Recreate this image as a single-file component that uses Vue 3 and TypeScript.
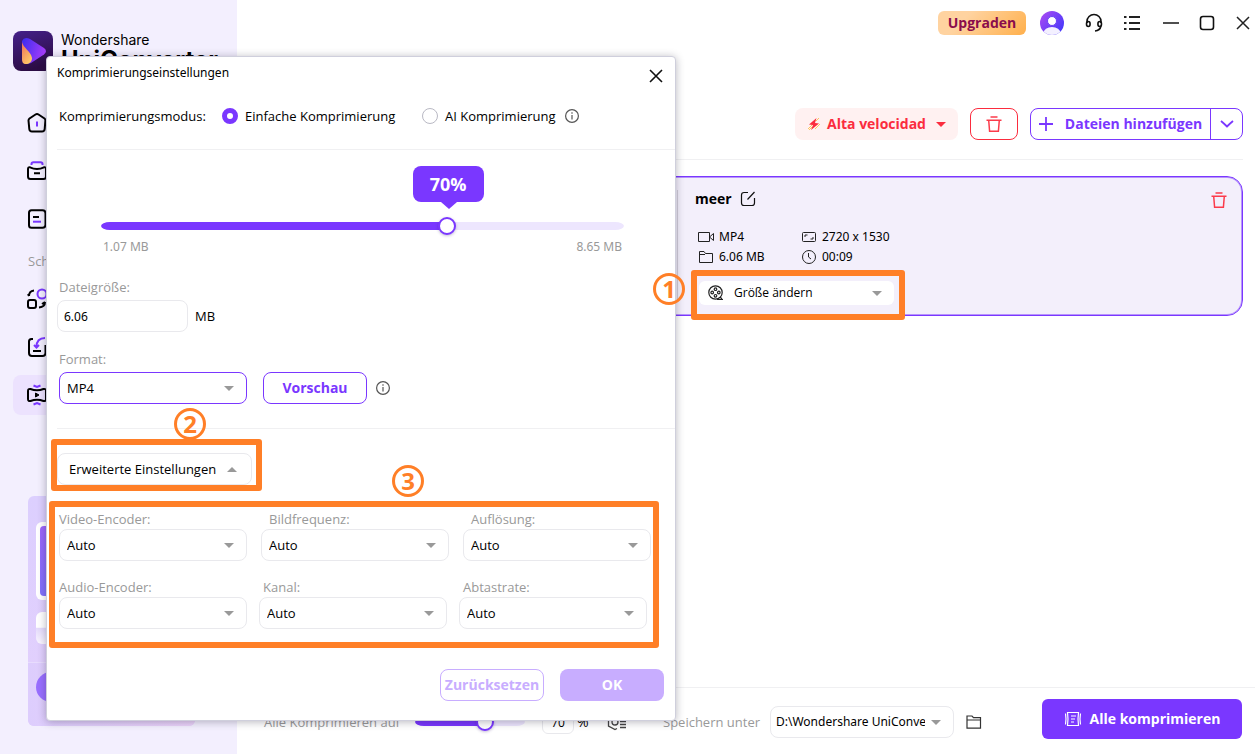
<script setup lang="ts">
import { computed, ref } from 'vue'

interface Field {
  id: string
  label: string
  indent: string
}

const percent = ref(70)
const batchPercent = ref(70)
const mode = ref('simple')
const size = ref('6.06')
const minPercent = 10

const fill = computed(() => ((percent.value - minPercent) / (100 - minPercent)) * 100)
const batchFill = computed(() => ((batchPercent.value - minPercent) / (100 - minPercent)) * 100)

const videoFields: Field[] = [
  { id: 'video-encoder', label: 'Video-Encoder:', indent: 'flush' },
  { id: 'frame-rate', label: 'Bildfrequenz:', indent: 'wide' },
  { id: 'resolution', label: 'Auflösung:', indent: 'wide' },
]
const audioFields: Field[] = [
  { id: 'audio-encoder', label: 'Audio-Encoder:', indent: 'flush' },
  { id: 'channel', label: 'Kanal:', indent: 'narrow' },
  { id: 'sample-rate', label: 'Abtastrate:', indent: 'narrow' },
]
</script>

<template>
  <div class="app">
    <aside class="sidebar">
      <div class="brand">
        <svg class="logo" viewBox="0 0 40 40" aria-hidden="true">
          <defs>
            <linearGradient id="logo-bg" x1="0" y1="0" x2="0.3" y2="1">
              <stop offset="0" stop-color="#45208a" />
              <stop offset="1" stop-color="#2c0d45" />
            </linearGradient>
            <linearGradient id="logo-play" x1="0" y1="0" x2="1" y2="0.3">
              <stop offset="0" stop-color="#3a2cf0" />
              <stop offset="1" stop-color="#a23cf8" />
            </linearGradient>
            <linearGradient id="logo-drop" x1="0" y1="0" x2="0.6" y2="1">
              <stop offset="0" stop-color="#f0705a" />
              <stop offset="1" stop-color="#ffc766" />
            </linearGradient>
          </defs>
          <rect width="40" height="40" rx="8" fill="url(#logo-bg)" />
          <path d="M9 10Q11 5.500 17 8L31 17Q35 20 31 23.500L18 32Q12 34 9 29Z" fill="url(#logo-play)" />
          <path d="M9 11C10 17 18 20 19 27C19 31 16 33 13 33C10 33 9 31 9 28Z" fill="url(#logo-drop)" />
        </svg>
        <div class="brand-name">
          <span>Wondershare</span>
          <strong>UniConverter</strong>
        </div>
      </div>

      <nav class="nav" aria-label="Navigation">
        <a class="nav-item" href="#home" aria-label="Start">
          <svg viewBox="0 0 20 20"><path d="M8.500 1.500Q10 .5 11.500 1.500L17.500 5.500Q18.500 6.300 18.400 7.500L17.700 16Q17.500 18.500 15 18.500H5Q2.500 18.500 2.300 16L1.500 7.500Q1.500 6.300 2.500 5.500Z" /><path class="accent" d="M10 8.500V13.500" /></svg>
        </a>
        <a class="nav-item" href="#tools" aria-label="Werkzeuge">
          <svg viewBox="0 0 20 20"><path class="accent" d="M4.500 4V3Q4.500 1.200 6.500 1.200H13.500Q15.500 1.200 15.500 3V4" /><path d="M1 8Q1 6 3 6.300Q10 9.500 17 6.300Q19 6 19 8V15.500Q19 18 16.500 18H3.500Q1 18 1 15.500ZM7 12.300H13" /></svg>
        </a>
        <a class="nav-item" href="#files" aria-label="Dateien">
          <svg viewBox="0 0 20 20"><path d="M4.500 1.200H15.500Q18.500 1.200 18.500 4.500V15.800Q18.500 18.800 15.500 18.800H4.500Q2 18.800 2 16.300V3.700Q2 1.200 4.500 1.200ZM6 8H12" /><path class="accent" d="M6 12.700H14" /></svg>
        </a>
        <span class="nav-caption">Schnellzugriff</span>
        <a class="nav-item" href="#convert" aria-label="Konvertieren">
          <svg viewBox="0 0 20 20"><rect x="1" y="11" width="8" height="8" rx="2" /><path d="M2 7Q2 2 7 1.500M2 7L1 5M18 13Q18 18 12 18.500M18 13L15 15" /><circle class="accent" cx="15" cy="5" r="4.500" /></svg>
        </a>
        <a class="nav-item" href="#download" aria-label="Herunterladen">
          <svg viewBox="0 0 20 20"><path d="M6 2H4.500Q2 2 2 4.500V16Q2 19 5 19H15.500Q18.500 19 18.500 16V8M6 14H14" /><path class="accent" d="M18 1Q9.500 1 9.500 10M7 8L9.500 10.500L12 8" /></svg>
        </a>
        <a class="nav-item active" href="#compress" aria-label="Komprimieren">
          <svg viewBox="0 0 20 20"><path d="M1 6Q1 3.500 3.500 4Q10 6.500 16.500 4Q19 3.500 19 6V14Q19 16.500 16.500 16Q10 13.500 3.500 16Q1 16.500 1 14Z" /><path d="M8.500 8L12 10L8.500 12Z" fill="#000" stroke-width="1" /><path class="accent" d="M6.500 .5L10 2L13.500 .5M6.500 19.500L10 18L13.500 19.500" /></svg>
        </a>
      </nav>

      <div class="promo" aria-hidden="true">
        <div class="promo-picture"><div></div></div>
        <div class="promo-bar"></div>
        <div class="promo-foot"><div class="promo-button"></div></div>
      </div>
    </aside>

    <main class="main">
      <header class="titlebar">
        <button class="upgrade" type="button">Upgraden</button>
        <button class="icon-button" type="button" aria-label="Konto">
          <svg width="24" height="24" viewBox="0 0 24 24">
            <defs>
              <linearGradient id="avatar" x1="0" y1="0" x2="1" y2="0.8"><stop offset="0" stop-color="#b04cf2" /><stop offset="1" stop-color="#4338fb" /></linearGradient>
              <clipPath id="avatar-clip"><circle cx="12" cy="12" r="12" /></clipPath>
            </defs>
            <g clip-path="url(#avatar-clip)"><rect width="24" height="24" fill="url(#avatar)" /><ellipse cx="12" cy="22" rx="8.500" ry="6" fill="#f3f0ff" /><circle cx="12" cy="10" r="4.500" fill="#fff" stroke="#6b42f5" /></g>
          </svg>
        </button>
        <button class="icon-button" type="button" aria-label="Support">
          <svg width="20" height="20" viewBox="0 0 20 20" fill="none" stroke="#111" stroke-width="1.600"><path d="M3 10V8.500A7 7 0 0 1 17 8.500V10M17 13Q16 17.500 11 18" /><ellipse cx="4.300" cy="11" rx="1.800" ry="2.500" /><ellipse cx="15.700" cy="11" rx="1.800" ry="2.500" /></svg>
        </button>
        <button class="icon-button" type="button" aria-label="Menü">
          <svg width="16" height="16" viewBox="0 0 16 16" stroke="#222" stroke-width="1.800"><path d="M0 2H2.500M5 2H16M0 8H2.500M5 8H16M0 14H2.500M5 14H16" /></svg>
        </button>
        <button class="icon-button minimize" type="button" aria-label="Minimieren">
          <svg width="16" height="16" viewBox="0 0 16 16" stroke="#222" stroke-width="1.600"><path d="M0 8H16" /></svg>
        </button>
        <button class="icon-button" type="button" aria-label="Maximieren">
          <svg width="16" height="16" viewBox="0 0 16 16" fill="none" stroke="#111" stroke-width="1.600"><rect x="1.500" y="1.500" width="13" height="13" rx="2.500" /></svg>
        </button>
        <button class="icon-button" type="button" aria-label="Schließen">
          <svg width="16" height="16" viewBox="0 0 16 16" stroke="#222" stroke-width="1.500"><path d="M2 2L14 14M14 2L2 14" /></svg>
        </button>
      </header>

      <div class="toolbar">
        <button class="speed" type="button">
          <svg width="14" height="14" viewBox="0 0 14 14"><path d="M1 12L6 7M2 13L5 10M8 12L13 7M9 4L12 1" stroke="#ffc65c" /><path d="M9.500 1L2 7.500L6 8L4 13L12 6.500L8 6Z" fill="#fb2c3e" /></svg>
          <span>Alta velocidad</span>
          <svg class="speed-arrow" width="10" height="5" viewBox="0 0 10 5"><path d="M0 0H10L5 5Z" fill="#fb2c3e" /></svg>
        </button>
        <button class="clear" type="button" aria-label="Liste leeren">
          <svg width="16" height="16" viewBox="0 0 16 16" fill="none" stroke="#fb3b4b" stroke-width="1.500"><path d="M4.500 1H11.500M.5 4.200H15.500M2.700 4.200L3.600 15.200H12.400L13.300 4.200" /></svg>
        </button>
        <div class="add">
          <button class="add-files" type="button">
            <svg width="14" height="14" viewBox="0 0 14 14" stroke="#7a37ff" stroke-width="1.800"><path d="M7 0V14M0 7H14" /></svg>
            <span>Dateien hinzufügen</span>
          </button>
          <button class="add-more" type="button" aria-label="Weitere Optionen">
            <svg width="14" height="8" viewBox="0 0 14 8" fill="none" stroke="#7a37ff" stroke-width="1.800"><path d="M1 1Q4 3.500 7 6.500Q10 3.500 13 1" /></svg>
          </button>
        </div>
      </div>

      <section class="file-card">
        <div class="thumbnail"></div>
        <div class="file-info">
          <div class="file-name">
            <strong>meer</strong>
            <button class="icon-button" type="button" aria-label="Umbenennen">
              <svg width="16" height="16" viewBox="0 0 16 16" fill="none" stroke="#111" stroke-width="1.200"><path d="M8 1.500H4Q1.500 1.500 1.500 4V12Q1.500 14.500 4 14.500H12Q14.500 14.500 14.500 12V7M7.500 8.500L14.500 1" /></svg>
            </button>
          </div>
          <div class="meta">
            <svg width="16" height="12" viewBox="0 0 16 12"><path d="M.5 1.500H11.500V10.500H.5ZM11.500 6L15.500 2.500V9.500L11.500 6" /></svg>
            <span>MP4</span>
            <svg width="16" height="14" viewBox="0 0 16 14"><rect x="1.500" y="2.500" width="13" height="9" rx="1" /><path d="M4 7V5H6.500M12 7V9H9.500" /></svg>
            <span>2720 x 1530</span>
            <svg width="16" height="14" viewBox="0 0 16 14"><path d="M1.500 12.500V1.500H6L7.500 3.500H14.500V12.500ZM1.500 4.500H7" /></svg>
            <span>6.06 MB</span>
            <svg width="16" height="16" viewBox="0 0 16 16"><circle cx="8" cy="8" r="6.500" /><path d="M7.500 4V8L10 10" /></svg>
            <span>00:09</span>
          </div>
          <div class="resize">
            <svg class="reel" width="16" height="16" viewBox="0 0 16 16" fill="none" stroke="#222" stroke-width="1.200"><circle cx="7.500" cy="7.500" r="6.700" /><path d="M9 14.500H15M12 12L14 14" /><circle cx="7.500" cy="4.200" r="1.300" /><circle cx="7.500" cy="10.800" r="1.300" /><circle cx="4.200" cy="7.500" r="1.300" /><circle cx="10.800" cy="7.500" r="1.300" /></svg>
            <select aria-label="Größe ändern"><option>Größe ändern</option></select>
            <svg class="caret" width="10" height="5" viewBox="0 0 10 5"><path d="M0 0H10L5 5Z" /></svg>
            <div class="highlight"><span class="step step-one">1</span></div>
          </div>
        </div>
        <button class="icon-button remove" type="button" aria-label="Datei entfernen">
          <svg width="16" height="16" viewBox="0 0 16 16" fill="none" stroke="#fb3b4b" stroke-width="1.500"><path d="M4.500 1H11.500M.5 4.200H15.500M2.700 4.200L3.600 15.200H12.400L13.300 4.200" /></svg>
        </button>
      </section>

      <footer class="footer">
        <div class="footer-fields">
          <label class="batch-label" for="batch">Alle Komprimieren auf</label>
          <input id="batch" v-model.number="batchPercent" class="range batch-range" type="range" :min="minPercent" max="100" :style="{ '--fill': batchFill + '%' }" />
          <input v-model="batchPercent" class="batch-value" type="text" aria-label="Prozent" />
          <span class="percent-sign">%</span>
          <button class="icon-button" type="button" aria-label="Komprimierungseinstellungen">
            <svg width="20" height="18" viewBox="0 0 20 18" fill="none" stroke="#444" stroke-width="1.300"><path d="M14 4L8 1L1.500 4.500V13L8 16.500L10 15.500" /><circle cx="8" cy="9" r="3" /><path d="M13 8.500H19M13 11.500H19M13 14.500H19M16 2V5" /></svg>
          </button>
          <label class="save-label" for="target">Speichern unter</label>
          <div class="select target">
            <select id="target"><option>D:\Wondershare UniConverter</option></select>
            <svg class="caret" width="10" height="5" viewBox="0 0 10 5"><path d="M0 0H10L5 5Z" /></svg>
          </div>
          <button class="icon-button folder" type="button" aria-label="Ordner öffnen">
            <svg width="16" height="14" viewBox="0 0 16 14" fill="none" stroke="#333" stroke-width="1.200"><path d="M1 13V1H6L7.500 2.700H14.500V13.200H1ZM1 5H15" /></svg>
          </button>
        </div>
        <button class="compress-all" type="button">
          <svg width="18" height="16" viewBox="0 0 18 16" fill="none" stroke="#fff" stroke-width="1.200"><path d="M3.500 1.500H14.500Q13.500 8 14.500 14.500H3.500Q4.500 8 3.500 1.500ZM7 5H12M7 8H11M7 11H10M1.500 2.500Q2.500 8 1.500 13.500M16.500 2.500Q15.500 8 16.500 13.500" /></svg>
          <span>Alle komprimieren</span>
        </button>
      </footer>
    </main>

    <section class="dialog" role="dialog" aria-labelledby="dialog-title">
      <header class="dialog-header">
        <h1 id="dialog-title">Komprimierungseinstellungen</h1>
        <button class="icon-button" type="button" aria-label="Schließen">
          <svg width="16" height="16" viewBox="0 0 16 16" stroke="#111" stroke-width="1.600"><path d="M2 2L14 14M14 2L2 14" /></svg>
        </button>
      </header>

      <div class="mode">
        <span>Komprimierungsmodus:</span>
        <label><input v-model="mode" type="radio" name="mode" value="simple" />Einfache Komprimierung</label>
        <label><input v-model="mode" type="radio" name="mode" value="ai" />AI Komprimierung</label>
        <svg width="14" height="14" viewBox="0 0 14 14" class="info"><circle cx="7" cy="7" r="6.400" /><path d="M7 6V10.500M7 3.300V4.800" /></svg>
      </div>

      <div class="scale">
        <input v-model.number="percent" class="range" type="range" :min="minPercent" max="100" aria-label="Komprimierung" :style="{ '--fill': fill + '%' }" />
        <output class="bubble" :style="{ left: fill + '%' }">{{ percent }}%</output>
        <div class="scale-ends"><span>1.07 MB</span><span>8.65 MB</span></div>
      </div>

      <div class="size">
        <label for="size">Dateigröße:</label>
        <div class="size-row"><input id="size" v-model="size" type="text" /><span>MB</span></div>
      </div>

      <div class="format">
        <label for="format">Format:</label>
        <div class="format-row">
          <div class="select chosen">
            <select id="format"><option>MP4</option></select>
            <svg class="caret" width="10" height="5" viewBox="0 0 10 5"><path d="M0 0H10L5 5Z" /></svg>
          </div>
          <button class="preview" type="button">Vorschau</button>
          <svg width="14" height="14" viewBox="0 0 14 14" class="info"><circle cx="7" cy="7" r="6.400" /><path d="M7 6V10.500M7 3.300V4.800" /></svg>
        </div>
      </div>

      <div class="advanced">
        <div class="toggle-wrap">
          <button class="toggle" type="button" aria-expanded="true">
            <span>Erweiterte Einstellungen</span>
            <svg class="caret-up" width="10" height="5" viewBox="0 0 10 5"><path d="M0 5H10L5 0Z" /></svg>
          </button>
          <div class="highlight"><span class="step step-two">2</span></div>
        </div>
      </div>

      <div class="options">
        <div class="options-row video">
          <div v-for="field in videoFields" :key="field.id" class="field" :class="field.indent">
            <label :for="field.id">{{ field.label }}</label>
            <div class="select">
              <select :id="field.id"><option>Auto</option></select>
              <svg class="caret" width="10" height="5" viewBox="0 0 10 5"><path d="M0 0H10L5 5Z" /></svg>
            </div>
          </div>
        </div>
        <div class="options-row audio">
          <div v-for="field in audioFields" :key="field.id" class="field" :class="field.indent">
            <label :for="field.id">{{ field.label }}</label>
            <div class="select">
              <select :id="field.id"><option>Auto</option></select>
              <svg class="caret" width="10" height="5" viewBox="0 0 10 5"><path d="M0 0H10L5 5Z" /></svg>
            </div>
          </div>
        </div>
        <div class="highlight"><span class="step step-three">3</span></div>
      </div>

      <div class="actions">
        <button class="reset" type="button">Zurücksetzen</button>
        <button class="ok" type="button">OK</button>
      </div>
    </section>
  </div>
</template>

<style>
body {
  margin: 0;
  background: #fff;
}
</style>

<style scoped>
* {
  box-sizing: border-box;
}
.app {
  position: relative;
  display: flex;
  min-height: 100vh;
  font-family: 'Open Sans', 'Noto Sans', sans-serif;
  font-size: 13px;
  line-height: 20px;
  color: #000;
}
button,
input,
select {
  margin: 0;
  font: inherit;
  color: inherit;
}
button {
  display: flex;
  align-items: center;
  justify-content: center;
  padding: 0;
  border: 0;
  background: none;
  white-space: nowrap;
  cursor: pointer;
}
svg {
  display: block;
  flex: none;
}

.sidebar {
  display: flex;
  flex: 0 0 237px;
  flex-direction: column;
  background: #f3effe;
}
.brand {
  display: flex;
  gap: 8px;
  padding: 31px 0 0 13px;
}
.logo {
  width: 40px;
  height: 40px;
}
.brand-name {
  display: flex;
  flex-direction: column;
  font-family: Inter, sans-serif;
  font-size: 14px;
  line-height: 18px;
}
.brand-name strong {
  font-size: 24px;
  line-height: 22px;
}
.nav {
  display: flex;
  flex-direction: column;
  gap: 8px;
  padding: 32px 13px 0;
}
.nav-item {
  display: flex;
  align-items: center;
  height: 40px;
  padding-left: 14px;
  border-radius: 8px;
}
.nav-item.active {
  background: #ece2fe;
}
.nav-item svg {
  width: 20px;
  height: 20px;
  overflow: visible;
  fill: none;
  stroke: #000;
  stroke-width: 2;
}
.nav-item .accent {
  stroke: #7a37ff;
}
.nav-caption {
  height: 24px;
  padding: 4px 0 0 15px;
  color: #999;
}
.promo {
  display: flex;
  flex-direction: column;
  width: 167px;
  height: 230px;
  margin: 81px 0 0 28px;
  overflow: hidden;
  border-radius: 6px;
  background: linear-gradient(180deg, #dccffe, #e3d0fd);
}
.promo-picture {
  height: 78px;
  margin: 26px 8px 0;
  padding: 4px;
  border-radius: 6px;
  background: #fff;
}
.promo-picture div {
  height: 100%;
  border-radius: 4px;
  background: linear-gradient(#9d66fb, #8072fc);
}
.promo-bar {
  height: 32px;
  margin: 12px 8px 0;
  border-radius: 6px;
  background: linear-gradient(#fff 48%, #e4dafc 50%, #faf7ff);
}
.promo-foot {
  flex: 1;
  margin-top: 18px;
  padding: 9px 8px 0;
  border-top: 1px solid #e8dcfe;
  background: linear-gradient(90deg, #ddcdfd, #ecd4fa);
}
.promo-button {
  height: 30px;
  border-radius: 15px;
  background: #996fff;
}

.main {
  display: flex;
  flex: 1;
  flex-direction: column;
  min-width: 0;
  padding-left: 18px;
}
.titlebar {
  display: flex;
  align-items: center;
  justify-content: flex-end;
  gap: 20px;
  height: 46px;
  padding-right: 4px;
}
.upgrade {
  width: 88px;
  height: 24px;
  margin-right: -6px;
  border-radius: 6px;
  background: linear-gradient(135deg, #ffd3a0 30%, #ffb04c);
  color: #8a0d4c;
  font-size: 14px;
  font-weight: 700;
}
.minimize {
  margin-left: 3px;
}
.toolbar {
  display: flex;
  justify-content: flex-end;
  gap: 12px;
  margin: 62px 12px 0 0;
  padding-bottom: 19px;
  border-bottom: 1px solid #f0f0f2;
  font-size: 14px;
  font-weight: 700;
}
.speed {
  gap: 6px;
  width: 163px;
  height: 32px;
  border-radius: 8px;
  background: #fff1f1;
  color: #fb2c3e;
}
.speed-arrow {
  margin-left: 4px;
}
.clear {
  width: 48px;
  height: 32px;
  border: 1px solid #fb2c3e;
  border-radius: 8px;
}
.add {
  display: flex;
  width: 213px;
  height: 32px;
  border: 1px solid #7a37ff;
  border-radius: 8px;
  color: #7a37ff;
}
.add-files {
  flex: 1;
  gap: 12px;
}
.add-more {
  width: 32px;
  border-left: 1px solid #7a37ff;
}
.file-card {
  display: flex;
  height: 140px;
  margin: 16px 12px 0 0;
  border: 1px solid #7a37ff;
  border-radius: 16px;
  background: #f3effb;
  box-shadow: inset 0 0 0 1px #b794fc;
}
.thumbnail {
  flex: 0 0 422px;
  margin: 13px 0;
  border-right: 1px solid #d3cfda;
}
.file-info {
  flex: 1;
  padding: 12px 0 0 17px;
}
.file-name {
  display: flex;
  align-items: center;
  gap: 8px;
  font-size: 14px;
}
.meta {
  display: grid;
  grid-template-columns: 21px 82px 21px auto;
  grid-auto-rows: 20px;
  align-items: center;
  justify-content: start;
  margin: 18px 0 14px;
  padding-left: 3px;
  font-family: 'Noto Sans', sans-serif;
  font-size: 12px;
}
.meta svg {
  fill: none;
  stroke: #222;
  stroke-width: 1;
}
.resize {
  position: relative;
  display: flex;
  align-items: center;
  width: 195px;
  height: 24px;
  margin-left: 4px;
  border-radius: 6px;
  background: #fff;
  font-size: 12px;
}
.reel {
  position: absolute;
  left: 9px;
}
.resize select {
  padding-left: 35px;
}
.remove {
  align-self: flex-start;
  margin: 15px 15px 0 0;
}
.footer {
  display: flex;
  align-items: flex-start;
  justify-content: space-between;
  margin: auto 0 0 -18px;
  padding: 11px 13px 15px 27px;
  border-top: 1px solid #f0f0f2;
}
.footer-fields {
  display: flex;
  align-items: center;
  height: 32px;
  margin-top: 7px;
  white-space: nowrap;
}
.batch-label {
  flex: 0 0 151px;
  color: #999;
}
.batch-range {
  flex: 0 0 110px;
}
.batch-value {
  width: 32px;
  height: 24px;
  margin: 0 3px 0 17px;
  padding: 0;
  border: 1px solid #e8e8ec;
  border-radius: 6px;
  font-size: 12px;
  text-align: center;
}
.percent-sign {
  flex: 0 0 30px;
  font-size: 14px;
}
.save-label {
  flex: 0 0 107px;
  margin-left: 36px;
  color: #999;
}
.target {
  width: 184px;
  font-family: 'Noto Sans', sans-serif;
  font-size: 12px;
}
.select.target select {
  padding: 0 28px 0 5px;
}
.folder {
  margin-left: 12px;
}
.compress-all {
  gap: 8px;
  width: 200px;
  height: 40px;
  border-radius: 6px;
  background: #7a37ff;
  color: #fff;
  font-size: 14px;
  font-weight: 700;
}

select {
  width: 100%;
  height: 100%;
  padding: 0 30px 0 7px;
  overflow: hidden;
  appearance: none;
  border: 0;
  background: none;
}
.select {
  position: relative;
  display: flex;
  align-items: center;
  height: 32px;
  border: 1px solid #e9e9ed;
  border-radius: 8px;
  background: #fff;
}
.caret {
  position: absolute;
  right: 12px;
  fill: #999;
  pointer-events: none;
}
.caret-up {
  fill: #999;
}
.range {
  display: block;
  width: 100%;
  height: 18px;
  appearance: none;
  background: linear-gradient(#7a37ff, #7a37ff) left center / var(--fill) 8px no-repeat, #ede6fe;
  background-clip: content-box;
  padding: 5px 0;
  border-radius: 9px;
}
.range::-webkit-slider-runnable-track {
  height: 8px;
  border-radius: 4px;
}
.range::-webkit-slider-thumb {
  width: 18px;
  height: 18px;
  margin-top: -5px;
  appearance: none;
  border: 2px solid #7a37ff;
  border-radius: 50%;
  background: #fff;
  box-shadow: 0 1px 3px rgba(60, 30, 120, 0.3);
}

.dialog {
  position: absolute;
  z-index: 10;
  top: 56px;
  left: 46px;
  width: 630px;
  border: 1px solid #cfcfdc;
  border-radius: 4px;
  background: #fff;
  box-shadow: 0 1px 8px rgba(20, 15, 40, 0.3);
}
.dialog-header {
  display: flex;
  justify-content: space-between;
  height: 38px;
  padding: 0 11px 0 10px;
}
h1 {
  margin: 0;
  font-family: 'Noto Sans', sans-serif;
  font-size: 12px;
  font-weight: 400;
  line-height: 32px;
}
.mode {
  display: grid;
  grid-template-columns: 163px 200px auto auto;
  align-items: center;
  justify-content: start;
  height: 55px;
  margin-left: 10px;
  padding: 0 0 12px 2px;
  border-bottom: 1px solid #f0f0f2;
  white-space: nowrap;
}
.mode label {
  display: flex;
  align-items: center;
  gap: 7px;
}
.mode input {
  width: 16px;
  height: 16px;
  appearance: none;
  border: 1px solid #b9b9c4;
  border-radius: 50%;
  background: #fff;
}
.mode input:checked {
  border: 5px solid #7a37ff;
}
.info {
  margin-left: 9px;
  fill: none;
  stroke: #555;
  stroke-width: 1.2;
}
.scale {
  position: relative;
  margin: 67px 51px 0 54px;
}
.bubble {
  position: absolute;
  bottom: 54px;
  width: 71px;
  height: 36px;
  margin-left: -37px;
  border-radius: 8px;
  background: #7a37ff;
  color: #fff;
  font-size: 18px;
  font-weight: 700;
  line-height: 36px;
  text-align: center;
}
.bubble::after {
  position: absolute;
  top: 36px;
  left: 28px;
  border: 8px solid transparent;
  border-top: 7px solid #7a37ff;
  border-bottom: 0;
  content: '';
}
.scale-ends {
  display: flex;
  justify-content: space-between;
  padding: 3px 2px 0;
  color: #999;
  font-family: 'Noto Sans', sans-serif;
  font-size: 12px;
  line-height: 18px;
}
.size,
.format {
  margin: 21px 0 0 10px;
}
.format {
  margin-top: 17px;
}
.size > label,
.format > label {
  display: block;
  margin-bottom: 3px;
  padding-left: 2px;
  color: #999;
}
.size-row {
  display: flex;
  align-items: center;
  gap: 7px;
}
.size-row input {
  width: 131px;
  height: 32px;
  padding: 0 6px;
  border: 1px solid #e9e9ed;
  border-radius: 8px;
  font-family: 'Noto Sans', sans-serif;
  font-size: 12px;
}
.format-row {
  display: flex;
  align-items: center;
  padding-left: 2px;
}
.select.chosen {
  width: 188px;
  border-color: #7a37ff;
}
.preview {
  width: 104px;
  height: 32px;
  margin-left: 16px;
  border: 1px solid #7a37ff;
  border-radius: 8px;
  color: #7a37ff;
  font-size: 14px;
  font-weight: 700;
}
.advanced {
  margin: 24px 0 0 10px;
  padding-top: 24px;
  border-top: 1px solid #f0f0f2;
}
.toggle-wrap {
  position: relative;
  width: 195px;
}
.toggle {
  justify-content: space-between;
  width: 100%;
  height: 32px;
  padding: 0 14px 0 11px;
  border: 1px solid #e9e9ed;
  border-radius: 8px;
}
.options {
  position: relative;
  width: 592px;
  margin: 25px 0 0 12px;
}
.options-row {
  display: grid;
  grid-template-columns: repeat(3, 188px);
}
.video {
  gap: 14px;
}
.audio {
  gap: 12px;
  margin-top: 17px;
}
.field label {
  display: block;
  color: #999;
  line-height: 19px;
}
.wide label {
  padding-left: 8px;
}
.narrow label {
  padding-left: 4px;
}
.actions {
  display: flex;
  justify-content: flex-end;
  gap: 16px;
  margin-top: 40px;
  padding: 0 11px 19px;
  font-size: 14px;
  font-weight: 700;
}
.actions button {
  width: 104px;
  height: 32px;
  border-radius: 8px;
}
.reset {
  border: 1px solid #c8adff;
  color: #c8adff;
}
.ok {
  background: #c8adff;
  color: #fff;
}

.highlight {
  position: absolute;
  z-index: 20;
  border: 6px solid #ff7f27;
  border-radius: 3px;
  pointer-events: none;
}
.resize .highlight {
  inset: -11px -11px -15px -8px;
}
.toggle-wrap .highlight {
  inset: -14px -10px -6px -6px;
}
.options > .highlight {
  inset: -9px -8px -19px -10px;
}
.step {
  position: absolute;
  width: 32px;
  height: 32px;
  border: 3px solid #ff7f27;
  border-radius: 50%;
  color: #ff7f27;
  font-size: 24px;
  font-weight: 700;
  line-height: 26px;
  text-align: center;
}
.step-one {
  top: -3px;
  left: -44px;
}
.step-two {
  top: -37px;
  left: 117px;
}
.step-three {
  top: -42px;
  left: 337px;
}
</style>
